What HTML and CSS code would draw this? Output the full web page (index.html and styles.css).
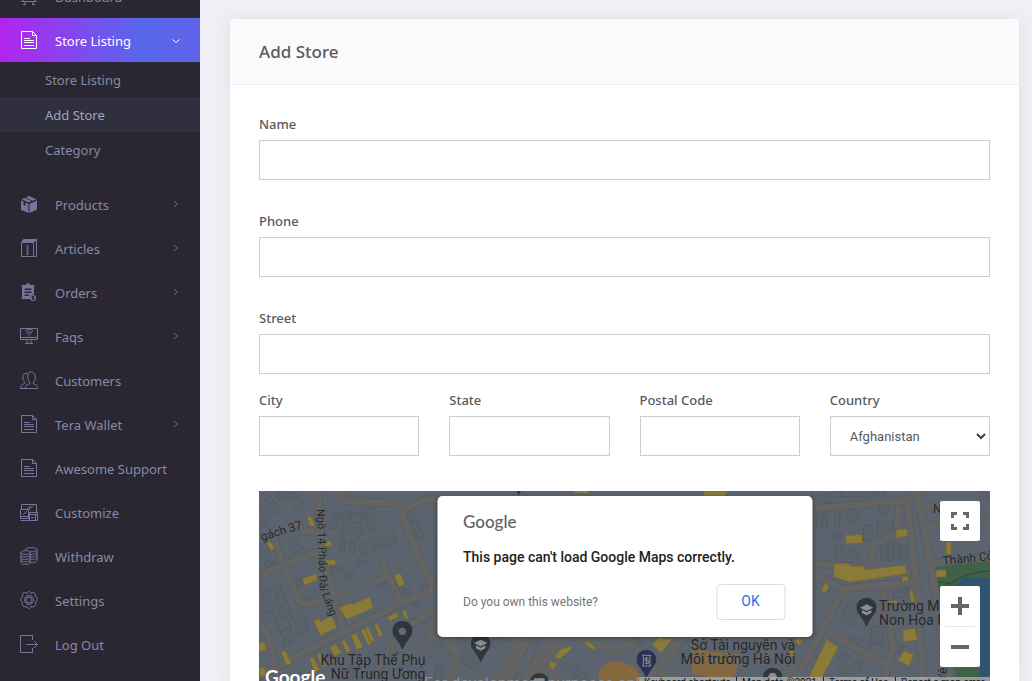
FILE: index.html
```html
<!DOCTYPE html>
<html lang="en">
<head>
<meta charset="utf-8">
<title>Add Store</title>
<link rel="stylesheet" href="styles.css">
</head>
<body>
<svg class="defs" aria-hidden="true">
  <symbol id="i-file" viewBox="0 0 18 18"><path d="M1.5.5h11l4 4v13h-15zM12.500.5v4h4M4 7.500h6M4 9.500h10M4 11.500h10M4 14.500h10"/></symbol>
  <symbol id="i-right" viewBox="0 0 8 8"><path d="M2 1l3.500 3-3.500 3"/></symbol>
  <symbol id="i-down" viewBox="0 0 8 8"><path d="M.5 2.500l3.500 3 3.500-3"/></symbol>
  <symbol id="i-pin" viewBox="0 0 20 29"><path d="M10 0a10 10 0 0 1 10 10c0 6-6 9-10 19C6 19 0 16 0 10A10 10 0 0 1 10 0z"/></symbol>
</svg>
<div class="app">
  <aside class="sidebar">
    <nav class="nav" aria-label="Main">
      <a class="item" href="#"><svg class="ico" viewBox="0 0 18 18"><path d="M3 4.500h12v10H3zM1 14.500h16M5 14.500v3M13 14.500v3M3 17.500h3M12 17.500h3"/></svg><span>Dashboard</span></a>
      <a class="item active" href="#"><svg class="ico"><use href="#i-file"/></svg><span>Store Listing</span><svg class="chev"><use href="#i-down"/></svg></a>
      <div class="sub">
        <a href="#">Store Listing</a>
        <a href="#" class="current">Add Store</a>
        <a href="#">Category</a>
      </div>
      <a class="item" href="#"><svg class="ico solid" viewBox="0 0 18 18"><path d="M1 5.500l2.500 1V10l2 1V7.500L8.500 9v9L1 14.800zM9.500 9L17 5.500v9.300L9.500 18zM1.500 4.300L4.500 3l7 3L9 7.500zM5.700 2.500L9 1l7.500 3.500-4 1.200z"/></svg><span>Products</span><svg class="chev"><use href="#i-right"/></svg></a>
      <a class="item" href="#"><svg class="ico" viewBox="0 0 18 18"><path d="M1.500 3.500h12v14h-12zM1.500 3.500l2-3h13l-3 3M16.500.5v17h-3M3 1.500h12M2.500 2.500h12M7.500 6c-2 2 2 3 0 5s2 3 0 5M7.500 6c2 2-2 3 0 5s-2 3 0 5"/></svg><span>Articles</span><svg class="chev"><use href="#i-right"/></svg></a>
      <a class="item" href="#"><svg class="ico solid" viewBox="0 0 18 18"><path fill-rule="evenodd" d="M2 2h4c0-2.500 4-2.500 4 0h4v9.500a3.500 3.500 0 0 0-4 4.500H2zM4.500 5.500V7h7V5.500zM4.500 8.500V10h7V8.500zM4.500 11.500V13H9v-1.500zM13 12a3 3 0 1 1 0 6 3 3 0 0 1 0-6z"/><path class="cut" d="M14 13.500h-2V15h2v1.500h-2M13 13v4"/></svg><span>Orders</span><svg class="chev"><use href="#i-right"/></svg></a>
      <a class="item" href="#"><svg class="ico" viewBox="0 0 18 18"><path d="M.5 1.500h17v11H.5zM.5 10.500h17M7 12.500v4M11 12.500v4M5 16.500h8M5 4c2-2 6-2 8 0M6 6c1.500-1.500 4.500-1.500 6 0M7.500 7.500c1-1 2-1 3 0M9 8.500v1"/></svg><span>Faqs</span><svg class="chev"><use href="#i-right"/></svg></a>
      <a class="item" href="#"><svg class="ico" viewBox="0 0 18 18"><path d="M5.500 17.500h12c0-4-1-3.500-4-4.500v-2c2-2 2-4 1.500-7C14.500 0 8 0 8 3.500c-.5 4 0 6 1.500 7.500v2c-3 1-4 .5-4 4.500zM7.500 2.500C3 2 2.500 4.500 3 7c0 2 1 3 2 4.500 0 2-4.500 1-4.500 6h5"/></svg><span>Customers</span></a>
      <a class="item" href="#"><svg class="ico"><use href="#i-file"/></svg><span>Tera Wallet</span><svg class="chev"><use href="#i-right"/></svg></a>
      <a class="item" href="#"><svg class="ico"><use href="#i-file"/></svg><span>Awesome Support</span></a>
      <a class="item" href="#"><svg class="ico" viewBox="0 0 18 18"><path d="M1.500 6V1.500h15V9M.5 6.500h8v9h-8zM.5 13.500h8M3 12l4-4M8.500 7l5-4.500M7 6l4-3M9.500 9.500h8v2h-8zM9.500 11.500v6h8v-6M.5 17.500h9M11 14.500h3M15.500 12v5"/></svg><span>Customize</span></a>
      <a class="item" href="#"><svg class="ico" viewBox="0 0 18 18"><path d="M1 5.500c0-2.500 9-2.500 9 0s-9 2.500-9 0zM1 5.500v10c0 2.500 9 2.500 9 0v-10M1 8c0 2.500 9 2.500 9 0M1 10.500c0 2.500 9 2.500 9 0M1 13c0 2.500 9 2.500 9 0M6 3.500v-1c0-2.500 11-2.500 11 0s-7 2.500-7 2M17 2.500v11c0 1.500-4 2.500-7 2M17 5c0 2-4 2.500-7 2.500M17 7.500c0 2-4 2.500-7 2.500M17 10c0 2-4 2.500-7 2.500"/></svg><span>Withdraw</span></a>
      <a class="item" href="#"><svg class="ico" viewBox="0 0 18 18"><circle cx="9" cy="9" r="4.500"/><circle cx="9" cy="9" r="3"/><path d="M7 2.500c0-2.500 4-2.500 4 0 3-2.500 5.500 0 4 3 3-.5 3 5 .5 5.500 1.500 3-1.500 6-4.500 4.500 0 2.500-4 2.500-4 0-3 1.500-6-1.500-4.500-4.500-2.500-.5-2.500-5 .5-5.500-1.500-3 1-5.500 4-3z"/></svg><span>Settings</span></a>
      <a class="item" href="#"><svg class="ico" viewBox="0 0 18 18"><path d="M12.500 5V.5H.5v17h12V13M6 9.500h11.500M14 6l3.500 3.500L14 13"/></svg><span>Log Out</span></a>
    </nav>
  </aside>
  <main class="main">
    <section class="card">
      <header class="card-head"><h1>Add Store</h1></header>
      <form class="card-body">
        <div class="field"><label for="name">Name</label><input id="name" type="text"></div>
        <div class="field"><label for="phone">Phone</label><input id="phone" type="text"></div>
        <div class="field street"><label for="street">Street</label><input id="street" type="text"></div>
        <div class="row">
          <div class="field"><label for="city">City</label><input id="city" type="text"></div>
          <div class="field"><label for="state">State</label><input id="state" type="text"></div>
          <div class="field"><label for="zip">Postal Code</label><input id="zip" type="text"></div>
          <div class="field"><label for="country">Country</label>
            <div class="select"><select id="country"><option>Afghanistan</option></select><svg viewBox="0 0 10 8"><path d="M1 2l4 4 4-4"/></svg></div>
          </div>
        </div>
        <div class="map">
          <svg class="canvas" viewBox="259 491 731 190" preserveAspectRatio="xMidYMin slice" aria-label="Map">
            <rect x="259" y="491" width="731" height="190" fill="#5b646e"/>
            <!-- west -->
            <g transform="translate(255 485) scale(.3333)">
              <g class="bld">
                <path d="M28 40l20-8 8 18-20 10zM62 25l22-9 8 22-20 8zM20 75l18-8 8 22-18 8zM45 62l20-8 8 24-20 8zM100 25l22-6 6 22-22 6zM120 62l24-8 6 20-24 8zM14 110l16-6 6 16-16 6zM14 205l26-12 8 16-30 14zM28 232l28-12 6 16-30 12zM98 170l26-12 10 22-24 12zM115 200l30-12 6 18-30 12zM232 90l22-8v24h-18zM262 85l20-8v30h-20zM288 82h30v32h-30zM325 78l32-10v28l-30 8zM262 120l22-6v30h-26zM292 130l26-8 8 28-28 8zM330 122l26-12 16 16-24 20zM258 165l12-4v36h-14zM280 175l16-8 8 30-16 8zM310 180l20-10 8 28-18 10zM345 165l22-10 8 30-20 8zM298 228l12-8 6 22-10 6zM318 210l16-10 12 28-18 10zM376 168l40-26 12 24-36 24zM450 85l20-6 14 24-16 12zM470 115l16-6 8 22-14 8zM482 140l16-8 10 26-14 6zM540 155h20v58h-20zM218 246h42v16h-42zM268 268l24-10 6 16-20 10zM220 110l28-2 2 20-30 4zM372 282l32-12 12 34-26 16-18-20zM145 322l38-8 6 20-40 10zM118 284l20-6 4 20-18 8z"/>
                <path d="M20 355l30-14 12 28-30 18zM60 338l26-14 10 28-24 14zM24 390l30-16 14 28-30 16zM68 368l30-14 12 28-30 16zM60 410l32-16 16 30-32 18zM102 388l36-18 18 30-34 18zM75 440l30-12 16 34-28 14zM120 425l30-12 12 24-26 14zM80 465l22-6 4 24-22 4zM20 320l22-10 8 22-26 12zM54 305l22-8 6 20-20 10zM445 315l16-6 6 20-14 8zM470 345l18-8 6 20-18 8zM495 300l20-8 8 20-20 10zM495 400l28-14 8 16-28 16zM530 500l30-22 12 30-22 26zM255 560l40-20 15 26-30 20z"/>
              </g>
              <g class="case">
                <path class="rd" d="M12 275l75-35 100-40M190 0l5 150 25 130 50 165M0 580l160-85 110-55 160-80 140-65M60 165l30 90 45 95 15 8 60-10 90-38M255 12l5 25q5 12 20 12l120 5q25 0 40 20 35-10 70-30l60-2M435 72l50 130 50 98M350 296l50-22 40 78M375 210l25 64M115 115l35 23 40 5M12 415l30 40 22 110M570 355l-130 80-75 125M560 370q-25 60-52 130"/>
              </g>
              <path class="rd" d="M12 275l75-35 100-40M190 0l5 150 25 130 50 165M0 580l160-85 110-55 160-80 140-65M60 165l30 90 45 95 15 8 60-10 90-38M255 12l5 25q5 12 20 12l120 5q25 0 40 20 35-10 70-30l60-2M435 72l50 130 50 98M350 296l50-22 40 78M375 210l25 64M115 115l35 23 40 5M12 415l30 40 22 110M570 355l-130 80-75 125M560 370q-25 60-52 130"/>
              <path class="yel" d="M155 97l12-5 13 28-12 6zM32 170l10-6 18 25-12 8zM208 168h22v16h-22zM212 224h30v16h-30zM142 282l42-17 2 20-38 16zM418 272l18-8 14 34-18 8zM253 368l34-14 8 4 50-24 8 36-78 34zM176 408l15-8 6 10 32-18 17 36-50 24zM398 396l28-14 4 14-26 12zM440 378l12-4 8 24-8 6zM12 476l16-6 6 24-22 8zM78 502l12-6 20 40-16 6zM224 488l18-12 18 26-20 12zM258 470l12-6 18 34-12 6zM288 452l16-8 20 42-18 10zM318 436l12-4 20 44-12 4zM330 430l10-4 20 42-12 4zM358 420l10-6 16 38-12 6zM164 522l12-6 18 40-16 6zM186 510l10-6 18 38-12 6zM12 552l16-8 6 24-18 10z"/>
              <use href="#i-pin" x="412" y="407" width="61" height="88" fill="#30363b"/>
              <circle cx="442" cy="439" r="11" fill="#666c70"/>
            </g>
            <!-- centre -->
            <g transform="translate(430 485) scale(.3333)">
              <path d="M24 0h576v588H0V455h24z" fill="#5b646e"/>
              <g class="bld"><path d="M88 458l84 40-34 62-82-50zM10 458h34l-8 28-30-10zM175 470l40-12 20 10-40 22zM20 540l24 10-8 38H12zM260 560l20 10-6 18h-24zM395 545l18-18 14 10-22 30zM420 560l14-22 18 14-20 28zM440 575l12-14 24 8-10 19z"/></g>
              <path class="rd" style="stroke-width:52" d="M310 440l-110 155"/>
              <path class="rd" style="stroke-width:34" d="M370 450l-80 140M300 588l90-130M250 500l140 88"/>
              <path class="rd" d="M-10 450l60 10 30 50-20 80M380 440l170 55 60 25"/>
              <path fill="#5b646e" stroke="#50565c" stroke-width="2" d="M310 456h24l-34 82-24-14z"/>
              <path class="yel" d="M372 518l20-26 34-10-4 12-32 28zM362 530l20 6-10 18-16-10zM464 474l10-6 24 20-8 8zM430 16h46v12l-42-4z"/>
              <ellipse cx="560" cy="575" rx="54" ry="48" fill="#86683f"/>
              <use href="#i-pin" x="122" y="446" width="60" height="86" fill="#30363b"/>
              <use href="#i-pin" x="298" y="564" width="60" height="86" fill="#30363b"/>
              <use href="#i-pin" x="236" y="-54" width="60" height="86" fill="#30363b"/>
              <path fill="#8b8f91" d="M132 474l20-10 20 10-20 10zM138 481l14 7 14-7v9l-14 7-14-7zM312 580h32v8h-32z"/>
            </g>
            <!-- south-east of the dialog -->
            <g transform="translate(620 485) scale(.3333)">
              <path d="M10 0h590v588H10z" fill="#5b646e"/>
              <g class="bld"><path d="M20 470l30-12 16 20-28 16zM165 500l36-34 30 20-40 44zM90 540l26-22 20 18-22 22zM480 510l20-30 22 10-16 40zM500 470l20-12 20 14-16 20z"/></g>
              <path class="rd" style="stroke-width:24" d="M0 450l70 60 100 80M190 450L80 600M500 588l70-130M380 450l160 120"/>
              <path class="yel" d="M96 480l20-22 40 4-32 42zM524 470l10-12 18 10-12 14zM500 510l12-16 16 10-12 16zM250 18h74l-8 16h-66zM575 366l22 16-8 14-16-8z"/>
              <path fill="#86683f" d="M212 478l60 22 88 8-14 60-30 20-100-22zM0 535c40 0 60 20 60 53H0z"/>
              <use href="#i-pin" x="49" y="494" width="60" height="86" fill="#2a3153"/>
              <use href="#i-pin" x="428" y="548" width="60" height="86" fill="#30363b"/>
              <path d="M66 511h28M66 543h28M70 511v32M90 511v32M86 520h-11v7h11v8H75M80 516v22" fill="none" stroke="#8a8d99" stroke-width="3"/>
              <circle cx="458" cy="576" r="13" fill="#8b8f91"/>
            </g>
            <!-- east -->
            <g transform="translate(800 485) scale(.3333)">
              <path d="M36 0h540v588H0V455h36z" fill="#5b646e"/>
              <g class="bld"><path d="M36 20l24-4v24l-24 4zM64 28l22-4 6 28-26 6zM95 18h28v20H95zM130 16h26v20h-26zM166 18h24v18h-24zM195 18h28v18h-28zM230 18h26v14h-26zM50 88h14v40H50zM68 86h14v42H68zM104 88h16v36h-16zM134 90l24-22 24 20-24 28zM190 120h26v48h-26zM238 62l26-4v26l-26 2zM100 144h24v18h-24zM140 196l32-4 4 26-38 2zM104 182h24v40h-24zM230 110h50v36h-50zM244 178h16v50h-16zM264 176h14v50h-14zM282 176h14v46h-14zM300 178h20v46h-20zM280 318l44-8v28h-44zM148 345l34 14-24 62-38-14zM214 426l36-4v54h-36zM148 452l66 24-16 38-64-30zM112 520l20-16 14 12-16 22zM112 548l26-14 14 12-20 26zM155 535l26-10 6 28-24 14zM540 20h24v24h-24zM300 480l12 4-6 22-12-4z"/></g>
              <path d="M398 250l172-28v366H470L400 300z" fill="#3f6145"/>
              <path d="M540 588V330l-70-20c0-25 20-35 50-32h50v310z" fill="#2f5472"/>
              <path d="M402 288l48 8q50-35 120-38M448 295v20" fill="none" stroke="#2f4533" stroke-width="3"/>
              <g class="case"><path class="rd" d="M36 72l300-28M320 30l30 270 20 288M350 16l50 270 50 302M365 68l70-5M370 125l200-20M395 235l175-20M295 60q5 85-20 95l-50 18q-10 40-15 75L36 235M36 262l90 50 250-25M130 315L0 560M250 315q10 100 30 160-5 40-30 110M85 445l190 100"/></g>
              <path class="rd" d="M36 72l300-28M320 30l30 270 20 288M350 16l50 270 50 302M365 68l70-5M370 125l200-20M395 235l175-20M295 60q5 85-20 95l-50 18q-10 40-15 75L36 235M36 262l90 50 250-25M130 315L0 560M250 315q10 100 30 160-5 40-30 110M85 445l190 100"/>
              <path class="yel" d="M136 152l50-4 2 26-50 2zM288 134l34-2v22l-34 4zM100 238l44-4 8 10 38-2 4 12 122-14 4 26-172 26-46-16zM306 276l20-2v14l-20 2zM64 316l10-22 14 8-12 24zM264 348l30-2-4 10-28 2zM328 318l10-2 6 32-10 6zM308 434l38-4 6 36-42 4zM312 496l30 14-16 34-32-18zM438 170h16v38h-16zM408 256l30-2v22h-30zM80 464l36 22-56 102H20zM0 460l10 4-10 18z"/>
              <use href="#i-pin" x="169" y="338" width="61" height="88" fill="#30363b"/>
              <path fill="#8b8f91" d="M180 368l20-10 20 10-20 10zM186 375l14 7 14-7v9l-14 7-14-7z"/>
            </g>
            <g class="places">
              <text transform="translate(262 541) rotate(-17)" font-size="12">gách 37</text>
              <text transform="translate(317 509) rotate(88)" font-size="11">Ngõ 14 Pháo Đài</text>
              <text transform="translate(322 594) rotate(70)" font-size="11">Láng</text>
              <text x="373" y="665" text-anchor="middle">Khu Tập Thể Phụ</text>
              <text x="378" y="679" text-anchor="middle">Nữ Trung Ương</text>
              <text x="743" y="650" text-anchor="middle">Sở Tài nguyên và</text>
              <text x="738" y="664" text-anchor="middle">Môi trường Hà Nội</text>
              <text x="879" y="611">Trường Mầm</text>
              <text x="879" y="625">Non Họa Mi</text>
              <text transform="translate(943 565) rotate(-6)" font-size="12">Thành Công</text>
              <text x="933" y="513" font-size="12">Ng</text>
              <text transform="translate(946 681) rotate(-86)" font-size="12">Yên Lãng</text>
            </g>
            <text class="mark" x="424" y="689">For development purposes only</text>
            <text class="logo" x="265" y="684">Google</text>
            <rect x="639" y="677" width="351" height="10" fill="#aaa" opacity=".8"/>
            <g class="legal"><text x="644" y="686">Keyboard shortcuts</text><text x="742" y="686">Map data ©2021</text><text x="829" y="686">Terms of Use</text><text x="901" y="686">Report a map error</text><path d="M736.500 677v8M823.500 677v8M895.500 677v8" stroke="#222"/></g>
          </svg>
          <div class="dialog" role="dialog" aria-label="Google Maps error">
            <div class="brand">Google</div>
            <p>This page can't load Google Maps correctly.</p>
            <div class="foot"><a href="#">Do you own this website?</a><button type="button">OK</button></div>
          </div>
          <div class="controls">
            <button type="button" class="full" aria-label="Toggle fullscreen"><svg viewBox="0 0 18 18"><path d="M1.500 6V1.500H6M12 1.500h4.500V6M16.500 12v4.500H12M6 16.500H1.500V12"/></svg></button>
            <div class="zoom">
              <button type="button" aria-label="Zoom in"><svg viewBox="0 0 18 18"><path d="M0 9h18M9 0v18"/></svg></button>
              <button type="button" aria-label="Zoom out"><svg viewBox="0 0 18 18"><path d="M0 9h18"/></svg></button>
            </div>
          </div>
        </div>
      </form>
    </section>
  </main>
</div>
</body>
</html>
```
FILE: styles.css
```css
* { box-sizing: border-box; }
body {
  margin: 0;
  font: 13px/20px "Noto Sans", sans-serif;
  color: #575962;
  background: #efeff6;
}
.defs { position: absolute; width: 0; height: 0; }
.app { display: flex; height: 100vh; overflow: hidden; }

/* sidebar */
.sidebar { flex: 0 0 200px; background: #2a2733; overflow: hidden; }
.nav { display: flex; flex-direction: column; margin-top: -26px; }
.nav a { color: #868aa8; text-decoration: none; }
.item { display: flex; align-items: center; height: 44px; padding: 2px 20px 0; gap: 17px; }
.item span { flex: 1; white-space: nowrap; }
.ico { flex: none; width: 18px; height: 18px; margin-bottom: 2px; fill: none; stroke: #74779a; stroke-width: 1; }
.ico.solid { fill: #74779a; stroke: none; }
.ico .cut { fill: none; stroke: #2a2733; stroke-width: 1; }
.chev { flex: none; width: 8px; height: 8px; margin-bottom: 2px; fill: none; stroke: #6c6f8d; }
.nav .item.active { color: #fff; background: linear-gradient(90deg, #b224ef, #5867ec 70%, #5e63e8); }
.active .ico, .active .chev { stroke: #fff; }
.active .chev { margin-bottom: 0; }
.sub { display: flex; flex-direction: column; padding-bottom: 15px; }
.sub a { height: 35px; padding: 8px 45px 0; }
.sub a.current { background: #302f3d; color: #9fa3c4; }

/* form card */
.main { flex: 1; min-width: 0; display: flex; padding: 19px 13px 0 30px; }
.card { flex: 1; min-width: 0; display: flex; flex-direction: column; background: #fff; box-shadow: 0 1px 15px 1px rgba(69, 65, 78, .08); }
.card-head { padding: 20px 29px; border-bottom: 1px solid #ebedf2; background: #fafafa; }
.card-head h1 { margin: 0; font-size: 17px; line-height: 25px; font-weight: 500; }
.card-body { flex: 1; min-height: 0; display: flex; flex-direction: column; padding: 29px 29px 0; }
.field { display: flex; flex-direction: column; gap: 6px; margin-bottom: 31px; min-width: 0; }
.field.street { margin-bottom: 16px; }
label { font-weight: 500; }
input, select { width: 100%; height: 40px; border: 1px solid #ccced1; border-radius: 0; background: #fff; color: #575962; padding: 0 19px; font: 13px Roboto, sans-serif; }
select { appearance: none; }
.select { display: grid; align-items: center; }
.select > * { grid-area: 1 / 1; }
.select svg { justify-self: end; width: 10px; height: 8px; margin-right: 4px; fill: none; stroke: #40424a; stroke-width: 2; pointer-events: none; }
.row { display: grid; grid-template-columns: repeat(4, 1fr); gap: 30px; margin-bottom: 35px; }
.row .field { margin: 0; }

/* map */
.map { flex: 1; min-height: 0; position: relative; overflow: hidden; background: #5b646e; font-family: Roboto, sans-serif; }
.canvas { display: block; width: 100%; height: 100%; }
.bld { fill: #59626b; stroke: #50575e; stroke-width: 2; }
.rd { fill: none; stroke: #636363; stroke-width: 21; stroke-linejoin: round; }
.case .rd { stroke: #545a60; stroke-width: 25; }
.yel { fill: #8b7b3a; stroke: #6f6231; stroke-width: 2; }
.places { font-size: 14px; fill: #24282c; stroke: #63676b; stroke-width: 1; paint-order: stroke; }
.mark { font-size: 16px; fill: #8d9093; }
.logo { font: 700 19px Lato, sans-serif; fill: #fff; }
.legal { font-size: 10px; fill: #111; }
.dialog { position: absolute; top: 5px; left: 50%; transform: translateX(-50%); width: 375px; padding: 14px 27px 17px 26px; border-radius: 5px; background: #fff; box-shadow: 0 1px 4px rgba(0, 0, 0, .4); }
.brand { font: 500 17px/24px Lato, sans-serif; color: #5f6368; }
.dialog p { margin: 12px 0 16px; font-size: 14px; line-height: 22px; font-weight: 500; color: #212121; }
.foot { display: flex; align-items: center; justify-content: space-between; }
.foot a { color: #757575; font-size: 12px; text-decoration: none; }
.foot button { width: 69px; height: 36px; padding: 0 0 2px; border: 1px solid #dadce0; border-radius: 4px; background: #fff; color: #1a73e8; font: 14px Roboto, sans-serif; }
.controls { position: absolute; top: 10px; right: 10px; width: 40px; display: grid; gap: 45px; }
.controls button { display: grid; place-items: center; width: 40px; height: 40px; padding: 0; border: 0; border-radius: 2px; background: #fff; }
.controls svg { width: 18px; height: 18px; fill: none; stroke: #666; stroke-width: 4; }
.controls .full svg { stroke-width: 3; }
.zoom { background: linear-gradient(#e6e6e6, #e6e6e6) center / 30px 1px no-repeat #fff; display: grid; gap: 1px; border-radius: 2px; }
.controls .zoom button { background: transparent; }
```
